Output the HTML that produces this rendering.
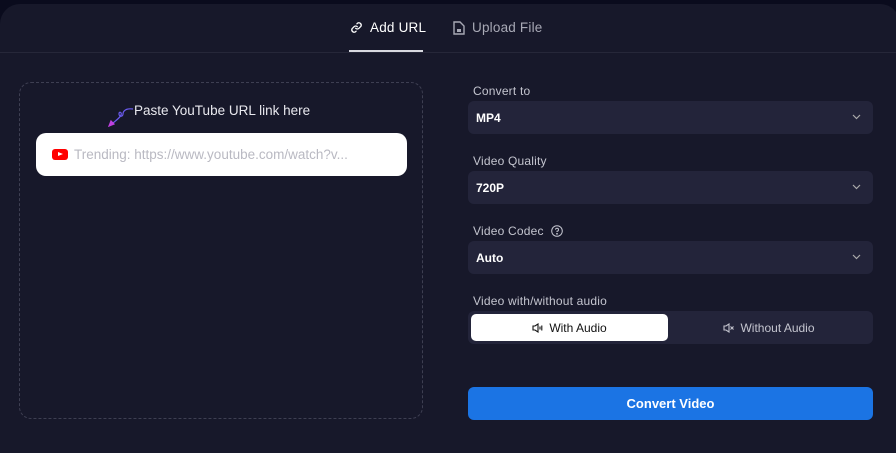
<!DOCTYPE html>
<html><head><style>
*{margin:0;padding:0;box-sizing:border-box}
html,body{width:896px;height:453px;overflow:hidden}
body{background:#0a0b1d;font-family:"Liberation Sans",sans-serif;position:relative}
.card{position:absolute;left:0;top:4px;width:900px;height:449px;background:#17182a;border-radius:20px 20px 0 0}
.tabline{position:absolute;left:0;right:0;top:52px;height:1px;background:#262739}
.tab{position:absolute;top:20px;font-size:13.5px;color:#a8a9b5;display:flex;align-items:center;gap:7px;letter-spacing:.2px}
.under{position:absolute;left:349px;top:50px;width:74px;height:2px;background:#d8d9e0}
.dash{position:absolute;left:19px;top:82px;width:404px;height:337px;border:1px dashed #3e3f52;border-radius:12px}
.hint{position:absolute;left:134px;top:103px;color:#e8e8ee;font-size:13.5px}
.input{position:absolute;left:36px;top:133px;width:371px;height:43px;background:#fff;border-radius:10px;display:flex;align-items:center;padding-left:16px;font-size:13.5px;color:#b9b9c2}
.yt{width:16px;height:11px;background:#f00;border-radius:3px;margin-right:6px;position:relative}
.yt:after{content:"";position:absolute;left:6px;top:3px;border-left:5px solid #fff;border-top:2.5px solid transparent;border-bottom:2.5px solid transparent}
.lbl{position:absolute;left:473px;font-size:12px;color:#c4c5cf;letter-spacing:.2px}
.sel{position:absolute;left:468px;width:405px;height:33px;background:#23243a;border-radius:6px;color:#fff;font-size:12px;font-weight:bold;padding-left:8px;line-height:34px}
.sel svg{position:absolute;right:12px;top:13px}
.tog{position:absolute;left:468px;top:311px;width:405px;height:33px;background:#23243a;border-radius:6px}
.on{position:absolute;left:3px;top:3px;width:197px;height:27px;background:#fff;border-radius:5px;font-size:12px;color:#111;display:flex;align-items:center;justify-content:center;gap:6px}
.off{position:absolute;left:200px;top:3px;width:202px;height:27px;font-size:12px;color:#c4c5cf;display:flex;align-items:center;justify-content:center;gap:6px}
.btn{position:absolute;left:468px;top:387px;width:405px;height:33px;background:#1b74e4;border-radius:6px;color:#fff;font-weight:bold;font-size:13px;text-align:center;line-height:33px}
</style></head><body>
<div class="card"></div>
<div class="tabline"></div>
<div class="tab" style="left:350px;color:#fff"><svg width="13" height="13" viewBox="0 0 16 16" fill="none" stroke="#fff" stroke-width="1.6" stroke-linecap="round"><path d="M7 9a3 3 0 0 0 4 0l2.5-2.5a3 3 0 0 0-4-4L8.5 3.5"/><path d="M9 7a3 3 0 0 0-4 0L2.5 9.5a3 3 0 0 0 4 4l1-1"/></svg>Add URL</div>
<div class="tab" style="left:453px"><svg width="12" height="14" viewBox="0 0 12 14" fill="none" stroke="#a8a9b5" stroke-width="1.4"><path d="M1 1h6l4 4v8H1z"/><rect x="4" y="8" width="4" height="3" fill="#a8a9b5" stroke="none"/></svg>Upload File</div>
<div class="under"></div>
<div class="dash"></div>
<svg style="position:absolute;left:106px;top:107px" width="28" height="22" viewBox="0 0 28 22" fill="none" stroke-width="1.2"><path d="M27 2C20 1 17 4 17 7c0 3-4 3-4 0s3-2 2 1c-1 3-6 6-9 9" stroke="#6b5bf0"/><path d="M3 19l2-5 3 3z" fill="#c040e0" stroke="#c040e0"/></svg>
<div class="hint">Paste YouTube URL link here</div>
<div class="input"><div class="yt"></div>Trending: https://www.youtube.com/watch?v...</div>
<div class="lbl" style="top:84px">Convert to</div>
<div class="sel" style="top:101px">MP4<svg width="9" height="6" viewBox="0 0 9 6"><path d="M1 1l3.5 3.5L8 1" stroke="#aaa" fill="none" stroke-width="1.2"/></svg></div>
<div class="lbl" style="top:154px">Video Quality</div>
<div class="sel" style="top:171px">720P<svg width="9" height="6" viewBox="0 0 9 6"><path d="M1 1l3.5 3.5L8 1" stroke="#aaa" fill="none" stroke-width="1.2"/></svg></div>
<div class="lbl" style="top:224px">Video Codec <svg style="vertical-align:-2px;margin-left:4px" width="12" height="12" viewBox="0 0 12 12" fill="none" stroke="#c4c5cf"><circle cx="6" cy="6" r="5.3"/><path d="M4.5 4.6a1.5 1.5 0 1 1 1.5 1.6V7"/><circle cx="6" cy="8.8" r=".4"/></svg></div>
<div class="sel" style="top:241px">Auto<svg width="9" height="6" viewBox="0 0 9 6"><path d="M1 1l3.5 3.5L8 1" stroke="#aaa" fill="none" stroke-width="1.2"/></svg></div>
<div class="lbl" style="top:294px">Video with/without audio</div>
<div class="tog"><div class="on"><svg width="11" height="10" viewBox="0 0 11 10" fill="none" stroke="#111" stroke-width="1.1"><path d="M1 3h2l3-2v8L3 7H1z"/><path d="M8 3.5v3M9.8 2.5v5"/></svg>With Audio</div>
<div class="off"><svg width="11" height="10" viewBox="0 0 11 10" fill="none" stroke="#c4c5cf" stroke-width="1.1"><path d="M1 3h2l3-2v8L3 7H1z"/><path d="M7.5 3.5l3 3M10.5 3.5l-3 3"/></svg>Without Audio</div></div>
<div class="btn">Convert Video</div>
</body></html>
